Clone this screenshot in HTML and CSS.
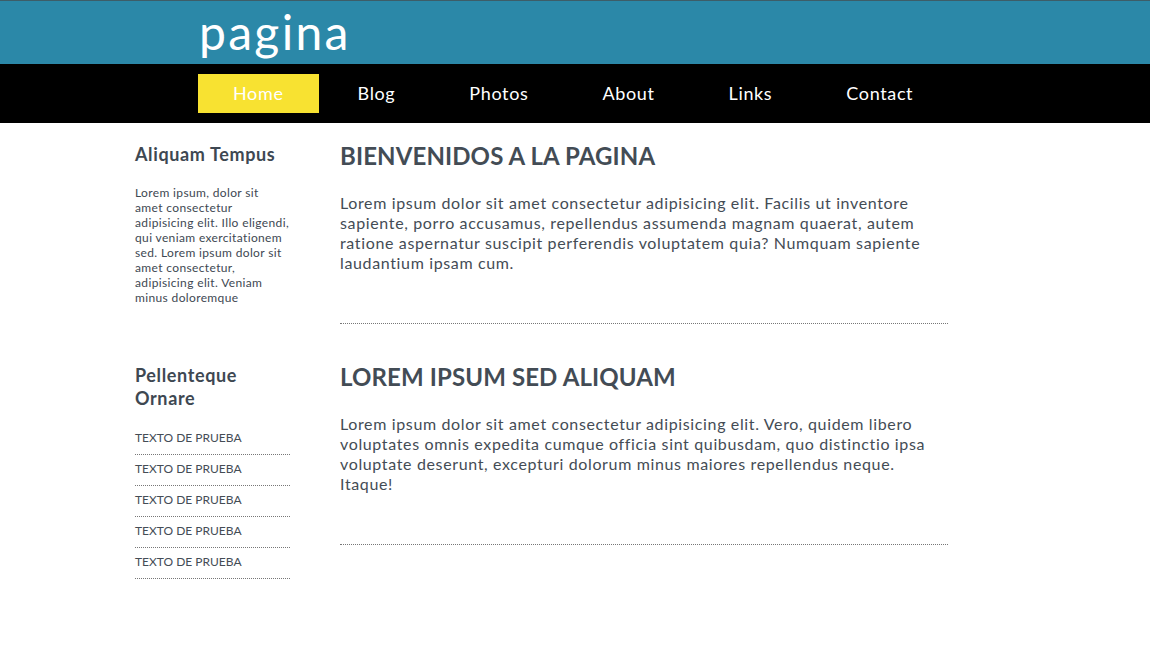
FILE: index.html
```html
<!DOCTYPE html>
<html lang="es">
<head>
<meta charset="utf-8">
<title>pagina</title>
<link rel="stylesheet" href="styles.css">
</head>
<body>
<header class="top">
  <div class="logo">pagina</div>
</header>
<nav class="nav">
  <ul class="menu">
    <li class="menu-item active">Home</li>
    <li class="menu-item">Blog</li>
    <li class="menu-item">Photos</li>
    <li class="menu-item">About</li>
    <li class="menu-item">Links</li>
    <li class="menu-item">Contact</li>
  </ul>
</nav>
<div class="content">
  <aside class="sidebar">
    <section class="widget">
      <h3 class="widget-title">Aliquam Tempus</h3>
      <p class="widget-text">Lorem ipsum, dolor sit amet consectetur adipisicing elit. Illo eligendi, qui veniam exercitationem sed. Lorem ipsum dolor sit amet consectetur, adipisicing elit. Veniam minus doloremque</p>
    </section>
    <section class="widget">
      <h3 class="widget-title">Pellenteque Ornare</h3>
      <ul class="links">
        <li class="link">Texto de prueba</li>
        <li class="link">Texto de prueba</li>
        <li class="link">Texto de prueba</li>
        <li class="link">Texto de prueba</li>
        <li class="link">Texto de prueba</li>
      </ul>
    </section>
  </aside>
  <main class="main">
    <article class="post">
      <h2 class="post-title">Bienvenidos a la pagina</h2>
      <p class="post-text">Lorem ipsum dolor sit amet consectetur adipisicing elit. Facilis ut inventore sapiente, porro accusamus, repellendus assumenda magnam quaerat, autem ratione aspernatur suscipit perferendis voluptatem quia? Numquam sapiente laudantium ipsam cum.</p>
    </article>
    <article class="post">
      <h2 class="post-title">Lorem ipsum sed aliquam</h2>
      <p class="post-text">Lorem ipsum dolor sit amet consectetur adipisicing elit. Vero, quidem libero voluptates omnis expedita cumque officia sint quibusdam, quo distinctio ipsa voluptate deserunt, excepturi dolorum minus maiores repellendus neque. Itaque!</p>
    </article>
  </main>
</div>
</body>
</html>
```

FILE: styles.css
```css
* { box-sizing: border-box; }
body {
  margin: 0;
  font-family: Lato, "Open Sans", sans-serif;
  color: #444c55;
  background: #fff;
  letter-spacing: 0.04em;
}
.top {
  background: #2b88a8;
  border-top: 1px solid #3d5d68;
  height: 64px;
  padding-left: 199px;
}
.logo {
  color: #fff;
  font-size: 48px;
  line-height: 62px;
  letter-spacing: 0.048em;
}
.nav {
  background: #000;
  height: 59px;
  padding: 10px 0 0 198px;
}
.menu {
  list-style: none;
  margin: 0;
  padding: 0;
  display: flex;
  gap: 4px;
}
.menu-item {
  color: #fff;
  font-size: 18px;
  line-height: 39px;
  padding: 0 35px;
}
.menu-item.active {
  background: #f8e231;
}
.content {
  display: flex;
  padding: 0 0 0 135px;
  gap: 50px;
}
.sidebar {
  width: 155px;
  padding-top: 20px;
}
.widget { margin-bottom: 59px; }
.widget-title {
  margin: 0;
  font-size: 18px;
  line-height: 23px;
  font-weight: 700;
  color: #3e4852;
  letter-spacing: 0.035em;
}
.widget-text {
  margin: 19px 0 0;
  font-size: 12px;
  line-height: 15px;
  letter-spacing: 0.03em;
  color: #3e4852;
}
.links {
  list-style: none;
  margin: 14px 0 0;
  padding: 0;
}
.link {
  font-size: 12px;
  line-height: 15px;
  letter-spacing: 0;
  text-transform: uppercase;
  padding: 6px 0 9px;
  border-bottom: 1px dotted #777;
}
.main {
  width: 608px;
  padding-top: 18px;
}
.post {
  border-bottom: 1px dotted #777;
  padding-bottom: 50px;
  margin-bottom: 38px;
}
.post-title {
  margin: 0;
  font-size: 24px;
  line-height: 30px;
  font-weight: 700;
  letter-spacing: 0.005em;
  text-transform: uppercase;
  color: #434c55;
}
.post-text {
  margin: 22px 0 0;
  font-size: 16px;
  line-height: 20px;
}
```
